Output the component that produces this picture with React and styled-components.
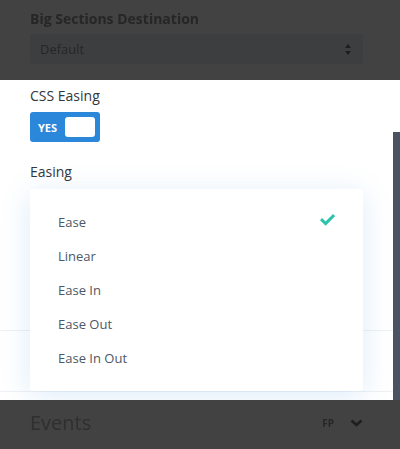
import styled, { createGlobalStyle } from 'styled-components'

const GlobalStyle = createGlobalStyle`
  html, body {
    margin: 0;
    padding: 0;
    overflow: hidden;
    font-family: "Open Sans", "Liberation Sans", sans-serif;
  }
`

const Page = styled.div`
  width: 400px;
  height: 449px;
  display: flex;
  flex-direction: column;
`

const Dimmed = styled.div`
  height: ${({ $h }) => $h}px;
  background: #424242;
  padding: 0 30px;
  box-sizing: border-box;
  display: flex;
  flex-direction: column;
  filter: blur(0.5px);
`

const DimLabel = styled.div`
  margin-top: 10px;
  font-size: 14px;
  font-weight: 700;
  line-height: 18px;
  color: #262626;
`

const DimSelect = styled.div`
  margin-top: 6px;
  width: 333px;
  height: 30px;
  box-sizing: border-box;
  border-radius: 3px;
  background: #3d3e40;
  display: flex;
  align-items: center;
  justify-content: space-between;
  padding: 0 12px 0 10px;
  font-size: 13px;
  color: #262626;
`

const DimToggle = styled.div`
  display: flex;
  align-items: center;
  justify-content: space-between;
  width: 333px;
  height: 45px;
`

const DimTitle = styled.div`
  font-size: 20px;
  color: #2e2f2f;
`

const DimRight = styled.div`
  display: flex;
  align-items: center;
  gap: 16px;
  font-size: 10px;
  font-weight: 700;
  color: #262626;
`

const Panel = styled.div`
  height: 320px;
  background: #fff;
  display: flex;
  position: relative;
`

const Content = styled.div`
  flex: 1;
  display: flex;
  flex-direction: column;
`

const Field = styled.div`
  padding: 0 30px;
  display: flex;
  flex-direction: column;
`

const Label = styled.div`
  font-size: 14px;
  line-height: 18px;
  color: #32373c;
  margin-top: ${({ $mt }) => $mt}px;
`

const Toggle = styled.div`
  margin-top: 7px;
  width: 70px;
  height: 30px;
  border-radius: 3px;
  background: #2b87da;
  display: flex;
  align-items: center;
  justify-content: space-between;
  padding: 0 5px 0 8px;
  box-sizing: border-box;
`

const ToggleText = styled.span`
  font-size: 11px;
  font-weight: 700;
  color: #fff;
`

const Knob = styled.span`
  width: 30px;
  height: 20px;
  border-radius: 3px;
  background: #fff;
`

const Divider = styled.div`
  height: 1px;
  background: #eef1f5;
  margin-top: ${({ $mt }) => $mt}px;
`

const Track = styled.div`
  width: 7px;
  padding-top: 52px;
  display: flex;
`

const Thumb = styled.div`
  flex: 1;
  background: #4a5361;
`

const Menu = styled.div`
  position: absolute;
  left: 30px;
  top: 109px;
  width: 333px;
  padding: 16px 0;
  background: #fff;
  border-radius: 3px;
  box-shadow: 0 5px 30px rgba(43, 135, 218, 0.16);
`

const Item = styled.div`
  height: 34px;
  display: flex;
  align-items: center;
  justify-content: space-between;
  padding: 0 28px;
  font-size: 13px;
  color: #4c5866;
`

const Check = () => (
  <svg width="15" height="12" viewBox="0 0 15 12" style={{ marginTop: -4 }}>
    <path d="M2 6.2 L5.6 9.6 L13 2.2" fill="none" stroke="#29c4a9" strokeWidth="3" strokeLinecap="square" />
  </svg>
)

const Arrows = () => (
  <svg width="6" height="11" viewBox="0 0 6 11">
    <path d="M3 0 L6 4 L0 4 Z M3 11 L6 7 L0 7 Z" fill="#1e1e1e" />
  </svg>
)

const Chevron = () => (
  <svg width="13" height="8" viewBox="0 0 13 8">
    <path d="M1.5 1.5 L6.5 6 L11.5 1.5" fill="none" stroke="#1e1e1e" strokeWidth="2.6" />
  </svg>
)

const options = ['Ease', 'Linear', 'Ease In', 'Ease Out', 'Ease In Out']

export default function App() {
  return (
    <>
      <GlobalStyle />
      <Page>
        <Dimmed $h={80}>
          <DimLabel>Big Sections Destination</DimLabel>
          <DimSelect>
            <span>Default</span>
            <Arrows />
          </DimSelect>
        </Dimmed>
        <Panel>
          <Content>
            <Field>
              <Label $mt={7}>CSS Easing</Label>
              <Toggle>
                <ToggleText>YES</ToggleText>
                <Knob />
              </Toggle>
              <Label $mt={21}>Easing</Label>
            </Field>
            <Divider $mt={149} />
            <Divider $mt={60} />
          </Content>
          <Track>
            <Thumb />
          </Track>
          <Menu>
            {options.map((o, i) => (
              <Item key={o}>
                <span>{o}</span>
                {i === 0 && <Check />}
              </Item>
            ))}
          </Menu>
        </Panel>
        <Dimmed $h={49}>
          <DimToggle>
            <DimTitle>Events</DimTitle>
            <DimRight>
              <span>FP</span>
              <Chevron />
            </DimRight>
          </DimToggle>
        </Dimmed>
      </Page>
    </>
  )
}
